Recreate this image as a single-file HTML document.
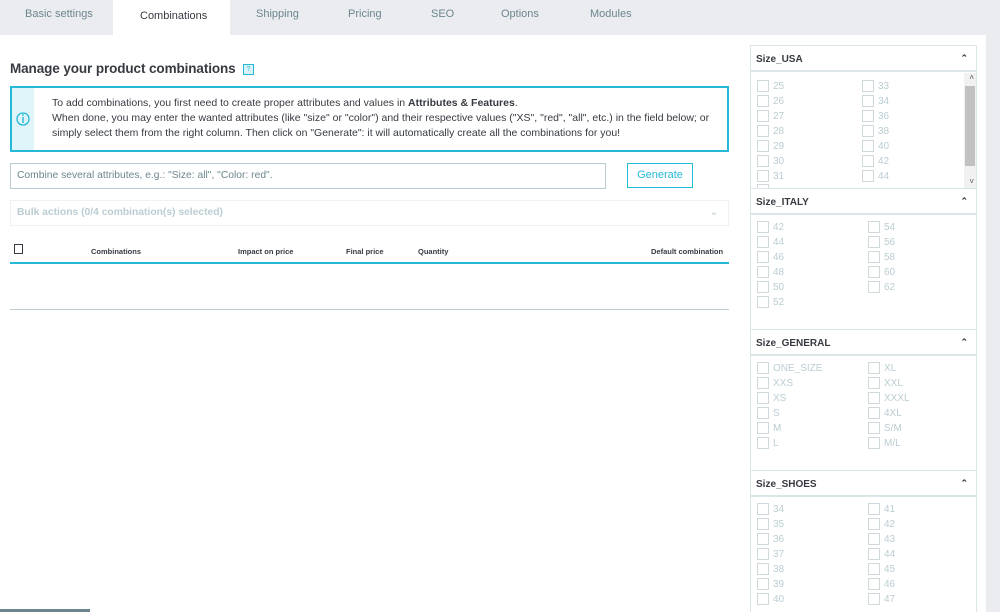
<!DOCTYPE html>
<html><head><meta charset="utf-8"><style>
*{box-sizing:border-box;margin:0;padding:0}
body{width:1000px;height:612px;overflow:hidden;background:#fff;font-family:"Liberation Sans",sans-serif;position:relative;color:#363a41}
.abs{position:absolute}
.tabs{left:0;top:0;width:1000px;height:35px;background:#eaecef}
.tab{position:absolute;top:8px;font-size:11px;color:#6c868e}
.tabact{left:113px;top:0;width:117px;height:35px;background:#fff}
.strip{left:986px;top:35px;width:14px;height:577px;background:#eaecef}
h2{position:absolute;left:10px;top:61px;font-size:13.5px;font-weight:bold;color:#363a41;letter-spacing:-0.1px}
.help{left:243px;top:64px;width:11px;height:11px;border:1px solid #25b9d7;background:#d8f2f8;font-size:7px;color:#25b9d7;text-align:center;line-height:9px}
.info{left:10px;top:86px;width:719px;height:66px;border:2px solid #25b9d7}
.info .ic{position:absolute;left:0;top:0;width:22px;height:62px;background:#dff5fa}
.info .txt{position:absolute;left:40px;top:8px;font-size:10.5px;line-height:15px;color:#363a41;white-space:nowrap}
.inp{left:10px;top:163px;width:596px;height:26px;border:1px solid #bbcdd2;font-size:10.3px;color:#6c868e;padding:6px 6px}
.gen{left:627px;top:163px;width:66px;height:25px;border:1px solid #25b9d7;color:#25b9d7;font-size:11px;text-align:center;line-height:23px}
.bulk{left:10px;top:200px;width:719px;height:26px;border:1px solid #eef1f2;font-size:10.3px;color:#bbcdd2;font-weight:bold;padding:6px 6px}
.th{position:absolute;top:247px;font-size:7.5px;font-weight:bold;color:#363a41}
.panel{left:750px;top:45px;width:227px;height:567px;border:1px solid #dbe6e9;border-bottom:none}
.hd{position:absolute;left:0;width:225px;height:26px;border-bottom:2px solid #dbe6e9;font-size:10px;font-weight:bold;padding:8px 5px;color:#363a41}
.hd span{position:absolute;right:8px;top:7px;font-size:9px}
.sec{position:absolute;left:0;width:225px;border-bottom:1px solid #dbe6e9}
.it{position:absolute;font-size:10px;color:#bbcdd2;height:15px;line-height:15px;padding-left:16px}
.it:before{content:"";position:absolute;left:0;top:1px;width:10px;height:10px;border:1px solid #cfd9dc}
</style></head><body>
<div class="abs tabs"></div>
<div class="abs tabact"></div>
<div class="tab" style="left:25px">Basic settings</div>
<div class="tab" style="left:140px;top:10px;color:#363a41">Combinations</div>
<div class="tab" style="left:256px">Shipping</div>
<div class="tab" style="left:348px">Pricing</div>
<div class="tab" style="left:431px">SEO</div>
<div class="tab" style="left:501px">Options</div>
<div class="tab" style="left:590px">Modules</div>
<div class="abs strip"></div>

<h2>Manage your product combinations</h2>
<div class="abs help">?</div>
<div class="abs info"><div class="ic"><svg width="22" height="62"><circle cx="11" cy="31" r="6" fill="none" stroke="#25b9d7" stroke-width="1.3"/><line x1="11" y1="29" x2="11" y2="35" stroke="#25b9d7" stroke-width="1.4"/><circle cx="11" cy="27" r="0.9" fill="#25b9d7"/></svg></div>
<div class="txt">To add combinations, you first need to create proper attributes and values in <b>Attributes &amp; Features</b>.<br>When done, you may enter the wanted attributes (like "size" or "color") and their respective values ("XS", "red", "all", etc.) in the field below; or<br>simply select them from the right column. Then click on "Generate": it will automatically create all the combinations for you!</div></div>
<div class="abs inp">Combine several attributes, e.g.: "Size: all", "Color: red".</div>
<div class="abs gen">Generate</div>
<div class="abs bulk">Bulk actions (0/4 combination(s) selected)<span style="position:absolute;right:10px;top:5px;color:#bbcdd2;font-weight:normal">&#8964;</span></div>
<div class="abs" style="left:14px;top:244px;width:9px;height:10px;border:1px solid #363a41"></div>
<div class="th" style="left:91px">Combinations</div>
<div class="th" style="left:238px">Impact on price</div>
<div class="th" style="left:346px">Final price</div>
<div class="th" style="left:418px">Quantity</div>
<div class="th" style="left:651px">Default combination</div>
<div class="abs" style="left:10px;top:262px;width:719px;height:2px;background:#25b9d7"></div>
<div class="abs" style="left:10px;top:309px;width:719px;height:1px;background:#bbcdd2"></div>
<div class="abs" style="left:0;top:609px;width:90px;height:3px;background:#6c868e"></div>

<div class="abs panel">
<div class="hd" style="top:0">Size_USA<span>&#8963;</span></div>
<div class="sec" style="top:27px;height:116px;overflow:hidden">
<div class="abs" style="right:0;top:0;width:12px;height:116px;background:#f1f1f1"></div>
<div class="abs" style="right:1px;top:13px;width:10px;height:80px;background:#c1c1c1"></div>
<div class="abs" style="right:2px;top:0;font-size:8px;color:#555">&#708;</div>
<div class="abs" style="right:2px;top:104px;font-size:8px;color:#555">&#709;</div>
</div>
<div class="hd" style="top:143px">Size_ITALY<span>&#8963;</span></div>
<div class="sec" style="top:169px;height:115px"></div>
<div class="hd" style="top:284px">Size_GENERAL<span>&#8963;</span></div>
<div class="sec" style="top:310px;height:115px"></div>
<div class="hd" style="top:425px">Size_SHOES<span>&#8963;</span></div>
</div>
<div id="items"></div>
<script>
var d=[[["25","26","27","28","29","30","31"],["33","34","36","38","40","42","44"],79,862,"USA"],
[["42","44","46","48","50","52"],["54","56","58","60","62"],220,868],
[["ONE_SIZE","XXS","XS","S","M","L"],["XL","XXL","XXXL","4XL","S/M","M/L"],361,868],
[["34","35","36","37","38","39","40"],["41","42","43","44","45","46","47"],502,868]];
var h="";d.forEach(function(s){s[0].forEach(function(t,i){h+='<div class="it" style="left:757px;top:'+(s[2]+i*15)+'px">'+t+'</div>'});s[1].forEach(function(t,i){h+='<div class="it" style="left:'+s[3]+'px;top:'+(s[2]+i*15)+'px">'+t+'</div>'});});
h+='<div class="abs" style="left:757px;top:184px;width:12px;height:4px;border:1px solid #cfd9dc;border-bottom:none"></div>';
document.getElementById("items").innerHTML=h;
</script>
</body></html>
